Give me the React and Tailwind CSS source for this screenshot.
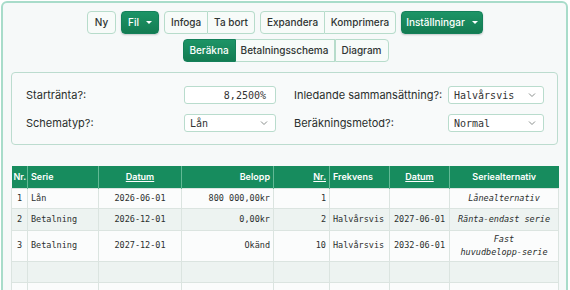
import React from "react";

const mono = "font-['DejaVu_Sans_Mono',monospace]";

function Caret() {
  return <span className="ml-[7px] inline-block w-0 h-0 border-x-[3px] border-t-[3px] border-x-transparent border-t-white" />;
}

function Chevron() {
  return (
    <svg width="8" height="6" viewBox="0 0 8 6" className="shrink-0">
      <polyline points="1,1.5 4,4.5 7,1.5" fill="none" stroke="#8a8f8d" strokeWidth="1" />
    </svg>
  );
}

const outline = "h-[23px] px-0 flex items-center whitespace-nowrap text-[10px] font-medium text-[#2f3533] bg-[#f7fbf9] border border-[#b7dccb]";
const solid = "h-[23px] px-0 flex items-center whitespace-nowrap text-[10px] font-medium text-white bg-[linear-gradient(#1d9466,#137c52)] border border-[#14805a] rounded-[4px] shadow-[0_1px_2px_rgba(0,0,0,0.2)]";

const cols = [16, 71, 83, 92, 56, 60, 60, 109];

const rows = [
  { nr: "1", serie: "Lån", datum: "2026-06-01", belopp: "800 000,00kr", n: "1", frek: "", d2: "", alt: ["Lånealternativ"], h: "h-[20px]" },
  { nr: "2", serie: "Betalning", datum: "2026-12-01", belopp: "0,00kr", n: "2", frek: "Halvårsvis", d2: "2027-06-01", alt: ["Ränta-endast serie"], h: "h-[22px]" },
  { nr: "3", serie: "Betalning", datum: "2027-12-01", belopp: "Okänd", n: "10", frek: "Halvårsvis", d2: "2032-06-01", alt: ["Fast", "huvudbelopp-serie"], h: "h-[31px]" },
  { nr: "", serie: "", datum: "", belopp: "", n: "", frek: "", d2: "", alt: [], h: "h-[21px]" },
  { nr: "", serie: "", datum: "", belopp: "", n: "", frek: "", d2: "", alt: [], h: "h-[21px]" },
];

const selectBox = "w-[96px] h-[18px] border border-[#b9dccd] rounded-[3px] bg-white flex items-center justify-between pl-[5px] pr-[7px] text-[10px] text-[#333] " + mono;

export default function App() {
  return (
    <div className="w-[570px] h-[290px] overflow-hidden bg-white font-['Inter',sans-serif]">
      <div className="ml-px mt-px w-[567px] h-[300px] border-2 border-[#a8dcca] rounded-[6px] bg-[#f6f9f9]">
        <div className="pt-[8px] flex flex-col items-center gap-[5px]">
          <div className="flex gap-[5px] ml-[1px]">
            <button className={outline + " rounded-[4px] w-[29px] justify-center"}>Ny</button>
            <button className={solid + " w-[38px] justify-center"}>Fil<Caret /></button>
            <div className="flex">
              <button className={outline + " rounded-l-[4px] w-[44px] justify-center"}>Infoga</button>
              <button className={outline + " rounded-r-[4px] border-l-0 w-[47px] justify-center"}>Ta bort</button>
            </div>
            <div className="flex">
              <button className={outline + " rounded-l-[4px] w-[65px] justify-center"}>Expandera</button>
              <button className={outline + " rounded-r-[4px] border-l-0 w-[71px] justify-center"}>Komprimera</button>
            </div>
            <button className={solid + " w-[82px] justify-center"}>Inställningar<Caret /></button>
          </div>
          <div className="flex ml-[2px]">
            <button className="h-[23px] w-[53px] flex items-center justify-center whitespace-nowrap text-[10px] font-medium text-white bg-[linear-gradient(#1d9466,#137c52)] border border-[#14805a] rounded-l-[4px]">Beräkna</button>
            <button className={outline + " border-l-0 w-[99px] justify-center"}>Betalningsschema</button>
            <button className={outline + " rounded-r-[4px] w-[54px] justify-center"}>Diagram</button>
          </div>
        </div>

        <div className="mx-[8px] mt-[10px] border border-[#bcdccf] rounded-[4px] bg-[#f8fafa] pt-[13px] pb-[12px] pl-[14px] flex flex-col gap-[10px] text-[11px] text-[#2a2f2d]">
          <div className="flex items-center">
            <div className="w-[158px]">Startränta?:</div>
            <div className={"w-[92px] h-[18px] border border-[#b9dccd] rounded-[3px] bg-white flex items-center justify-end pr-[9px] text-[10px] text-[#333] " + mono}>8,2500%</div>
            <div className="w-[18px]" />
            <div className="w-[154px]">Inledande sammansättning?:</div>
            <div className={selectBox}>
              <span>Halvårsvis</span><Chevron />
            </div>
          </div>
          <div className="flex items-center">
            <div className="w-[158px]">Schematyp?:</div>
            <div className={"w-[92px] h-[18px] border border-[#b9dccd] rounded-[3px] bg-white flex items-center justify-between pl-[5px] pr-[7px] text-[10px] text-[#333] " + mono}>
              <span>Lån</span><Chevron />
            </div>
            <div className="w-[18px]" />
            <div className="w-[154px]">Beräkningsmetod?:</div>
            <div className={selectBox}>
              <span>Normal</span><Chevron />
            </div>
          </div>
        </div>

        <table className="ml-[8px] mt-[21px] w-[547px] table-fixed border-collapse">
          <colgroup>
            {cols.map((w, i) => <col key={i} style={{ width: w }} />)}
          </colgroup>
          <thead>
            <tr className="h-[22px] bg-[#178c5e] text-white text-[9px]">
              <th className="text-left pl-[2px] border-r border-[#62b995] font-semibold">Nr.</th>
              <th className="text-left pl-[3px] border-r border-[#62b995] font-semibold">Serie</th>
              <th className="text-center border-r border-[#62b995] font-semibold underline">Datum</th>
              <th className="text-right pr-[3px] border-r border-[#62b995] font-semibold">Belopp</th>
              <th className="text-right pr-[3px] border-r border-[#62b995] font-semibold underline">Nr.</th>
              <th className="text-left pl-[3px] border-r border-[#62b995] font-semibold">Frekvens</th>
              <th className="text-center border-r border-[#62b995] font-semibold underline">Datum</th>
              <th className="text-center font-semibold">Seriealternativ</th>
            </tr>
          </thead>
          <tbody className={"text-[8.5px] text-[#2b2f2e] leading-[13px] " + mono}>
            {rows.map((r, i) => (
              <tr key={i} className={(i % 2 === 0 ? "bg-[#fbfcfc] " : "bg-[#edf3f1] ") + r.h}>
                <td className="text-center border border-[#dbe4e0]">{r.nr}</td>
                <td className="text-left pl-[3px] border border-[#dbe4e0]">{r.serie}</td>
                <td className="text-center border border-[#dbe4e0]">{r.datum}</td>
                <td className="text-right pr-[3px] border border-[#dbe4e0]">{r.belopp}</td>
                <td className="text-right pr-[3px] border border-[#dbe4e0]">{r.n}</td>
                <td className="text-left pl-[3px] border border-[#dbe4e0]">{r.frek}</td>
                <td className="text-center border border-[#dbe4e0]">{r.d2}</td>
                <td className="text-center italic border border-[#dbe4e0]">
                  {r.alt.map((a, j) => <div key={j}>{a}</div>)}
                </td>
              </tr>
            ))}
          </tbody>
        </table>
      </div>
    </div>
  );
}
